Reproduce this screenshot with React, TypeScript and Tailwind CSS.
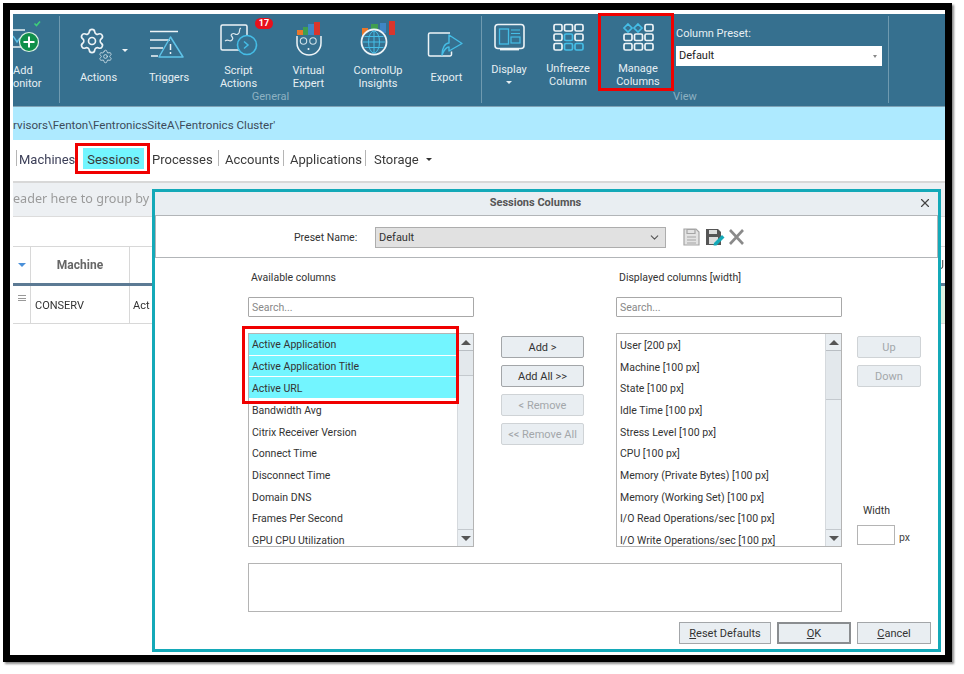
import type { ReactNode } from "react";
import { X, ChevronDown, Settings } from "lucide-react";

const available = [
  "Active Application",
  "Active Application Title",
  "Active URL",
  "Bandwidth Avg",
  "Citrix Receiver Version",
  "Connect Time",
  "Disconnect Time",
  "Domain DNS",
  "Frames Per Second",
  "GPU CPU Utilization",
];

const displayed = [
  "User [200 px]",
  "Machine [100 px]",
  "State [100 px]",
  "Idle Time [100 px]",
  "Stress Level [100 px]",
  "CPU [100 px]",
  "Memory (Private Bytes) [100 px]",
  "Memory (Working Set) [100 px]",
  "I/O Read Operations/sec [100 px]",
  "I/O Write Operations/sec [100 px]",
];

function RibbonItem({
  width,
  label,
  icon,
  children,
}: {
  width: string;
  label: ReactNode;
  icon: ReactNode;
  children?: ReactNode;
}) {
  return (
    <div className={`relative flex flex-col items-center shrink-0 ${width}`}>
      {icon}
      <div className="mt-[1px] h-[28px] flex items-center justify-center text-center text-[11px] leading-[13px] text-[#e6eff3]">
        {label}
      </div>
      {children}
    </div>
  );
}

function TabSep() {
  return <div className="w-px h-[16px] bg-[#b5b5b5] shrink-0" />;
}

function ListBox({
  items,
  selected,
  thumb,
  children,
}: {
  items: string[];
  selected: number;
  thumb: string;
  children?: ReactNode;
}) {
  return (
    <div className="relative">
      <div className="flex h-[214px] w-[226px] border border-[#b4b4b4] bg-white overflow-hidden">
        <div className="flex-1 min-w-0">
          {items.map((item, i) => (
            <div
              key={item}
              className={`h-[21.7px] flex items-center pl-[3px] pt-[2px] text-[10.5px] text-[#333] whitespace-nowrap ${
                i < selected ? "bg-[#73f5ff] border-b border-white" : ""
              }`}
            >
              {item}
            </div>
          ))}
        </div>
        <div className="w-[16px] bg-[#e9eef2] flex flex-col border-l border-[#d5d9dd]">
          <div className="h-[17px] bg-[#e9eef2] border-b border-[#b9bec3] flex items-center justify-center">
            <div className="w-0 h-0 border-x-[5px] border-x-transparent border-b-[5px] border-b-[#555]" />
          </div>
          <div className={`bg-[#e3e8ec] border-b border-[#c4c9ce] ${thumb}`} />
          <div className="flex-1" />
          <div className="h-[17px] border-t border-[#c4c9ce] flex items-center justify-center">
            <div className="w-0 h-0 border-x-[5px] border-x-transparent border-t-[5px] border-t-[#555]" />
          </div>
        </div>
      </div>
      {children}
    </div>
  );
}

function SearchBox() {
  return (
    <div className="h-[20px] w-[226px] border border-[#a8a8a8] rounded-[1px] bg-white flex items-center pl-[3px] pt-[2px] text-[10.5px] text-[#888]">
      Search...
    </div>
  );
}

function SideButton({
  children,
  disabled,
  width = "w-[83px]",
}: {
  children: ReactNode;
  disabled?: boolean;
  width?: string;
}) {
  return (
    <div
      className={`h-[22px] ${width} rounded-[2px] bg-[#e9eef2] border flex items-center justify-center pt-[2px] text-[11px] ${
        disabled ? "border-[#cfd3d6] text-[#a3a7aa]" : "border-[#a3a6a9] text-[#333]"
      }`}
    >
      {children}
    </div>
  );
}

function FooterButton({
  children,
  width,
  strong,
}: {
  children: ReactNode;
  width: string;
  strong?: boolean;
}) {
  return (
    <div
      className={`h-[22px] ${width} bg-[#e9eef2] flex items-center justify-center pt-[2px] text-[11px] text-[#333] ${
        strong ? "border-2 border-[#8a8d90]" : "border border-[#a3a6a9]"
      }`}
    >
      {children}
    </div>
  );
}

function SessionsDialog() {
  return (
    <div className="absolute left-[142px] top-[179px] w-[789px] h-[463px] border-[3px] border-[#14a9b8] bg-white flex flex-col">
      <div className="relative h-[23px] bg-[#e9eef2] flex items-center justify-center pr-[22px] shrink-0 text-[11px] font-bold text-[#555]">
        Sessions Columns
        <X className="absolute right-[6px] top-[4px] w-[14px] h-[14px] text-[#444]" strokeWidth={2} />
      </div>
      <div className="h-[43px] border border-[#b2b5b8] flex items-center pt-[1px] shrink-0">
        <div className="ml-[138px] w-[81px] pt-[2px] text-[10.5px] text-[#333]">Preset Name:</div>
        <div className="w-[291px] h-[21px] bg-[#e1e1e1] border border-[#adadad] flex items-center justify-between pl-[3px] pr-[3px] text-[11px] text-[#333]">
          <span className="pt-[2px]">Default</span>
          <ChevronDown className="w-[13px] h-[13px] text-[#555] mr-[1px]" />
        </div>
        <svg className="ml-[17px] w-[64px] h-[18px]" viewBox="0 0 64 18">
          <path d="M1 1h12l3 3v13H1z" fill="#e3e3e3" stroke="#a5a5a5" strokeWidth="1.2" />
          <path d="M4 1.5h8v4H4zM4 9h9M4 12h9M4 15h9" fill="none" stroke="#a5a5a5" strokeWidth="1.2" />
          <path d="M23 1h12l3 3v13H23z" fill="#555" />
          <path d="M26 2h8v4h-8zM26 9h9v7h-9z" fill="#ddd" />
          <path d="M31 15l8-8 2.5 2.5-8 8h-3z" fill="#14a9b8" />
          <path d="M47 2l13 14M60 2L47 16" stroke="#8a8a8a" strokeWidth="2.6" />
        </svg>
      </div>
      <div className="flex-1 pl-[93px]">
        <div className="flex">
          <div className="w-[226px]">
            <div className="h-[14px] mt-[13px] mb-[12px] pl-[3px] text-[10.5px] leading-[14px] text-[#333]">
              Available columns
            </div>
            <SearchBox />
            <div className="mt-[16px]">
              <ListBox items={available} selected={3} thumb="h-[25px]">
                <div className="absolute left-[-6px] top-[-7px] w-[217px] h-[78px] border-[3px] border-[#f00000]" />
              </ListBox>
            </div>
          </div>
          <div className="ml-[27px] w-[84px] pt-[78px] flex flex-col gap-[7px]">
            <SideButton>Add &gt;</SideButton>
            <SideButton>Add All &gt;&gt;</SideButton>
            <SideButton disabled>&lt; Remove</SideButton>
            <SideButton disabled>&lt;&lt; Remove All</SideButton>
          </div>
          <div className="ml-[31px] w-[226px]">
            <div className="h-[14px] mt-[13px] mb-[12px] pl-[3px] text-[10.5px] leading-[14px] text-[#333]">
              Displayed columns [width]
            </div>
            <SearchBox />
            <div className="mt-[16px]">
              <ListBox items={displayed} selected={0} thumb="h-[49px]" />
            </div>
          </div>
          <div className="ml-[15px] w-[64px] pt-[78px] flex flex-col">
            <div className="flex flex-col gap-[7px]">
              <SideButton disabled width="w-[64px]">Up</SideButton>
              <SideButton disabled width="w-[64px]">Down</SideButton>
            </div>
            <div className="mt-[117px] pl-[6px] text-[10.5px] leading-[14px] text-[#333]">Width</div>
            <div className="mt-[7px] flex items-end">
              <div className="w-[38px] h-[20px] border border-[#b4b4b4] bg-white" />
              <span className="ml-[4px] text-[10.5px] leading-[14px] text-[#444]">px</span>
            </div>
          </div>
        </div>
        <div className="mt-[16px] w-[594px] h-[49px] border border-[#b4b4b4] bg-white" />
      </div>
      <div className="flex justify-end gap-[6px] pr-[7px] pb-[5px] shrink-0">
        <FooterButton width="w-[92px]">
          <span><u>R</u>eset Defaults</span>
        </FooterButton>
        <FooterButton width="w-[74px]" strong>
          <span><u>O</u>K</span>
        </FooterButton>
        <FooterButton width="w-[74px]">
          <span><u>C</u>ancel</span>
        </FooterButton>
      </div>
    </div>
  );
}

export default function App() {
  return (
    <div className="w-[964px] h-[674px] bg-white pl-[3px] pt-[3px] font-['Roboto',sans-serif] overflow-hidden">
      <div className="w-[949px] h-[659px] border-[7px] border-black bg-white shadow-[2px_2px_2px_rgba(0,0,0,0.45)] blur-[0.6px]">
        <div className="relative h-full pl-[3px] pt-[4px] overflow-hidden">
          {/* Ribbon */}
          <div className="h-[93px] bg-[#36708f] border-b border-[#7fa3b6] flex pt-[2px]">
            <div className="w-[47px] shrink-0 h-[87px] border-r border-[#6f9ab0] overflow-hidden">
              <svg className="w-[46px] h-[46px]" viewBox="13 16 46 46" fill="none">
                <path d="M13 30h12M13 47h12" stroke="#e6eff3" strokeWidth="1.6" />
                <path d="M13 36l4 6 3-4" stroke="#5fc3e8" strokeWidth="1.4" />
                <circle cx="29" cy="42" r="9.5" fill="#0f8f4a" stroke="#dff3e6" strokeWidth="1.2" />
                <path d="M23.5 42h11M29 36.5v11" stroke="#fff" strokeWidth="2" />
                <path d="M34.5 23.5l2 2 3.5-4" stroke="#3ecf7a" strokeWidth="1.6" />
              </svg>
              <div className="mt-[1px] h-[28px] flex items-center text-[11px] leading-[13px] text-[#e6eff3]">
                <span>
                  Add
                  <br />
                  onitor
                </span>
              </div>
            </div>

            {/* General group */}
            <div className="w-[422px] shrink-0 flex flex-col h-[87px] border-r border-[#6f9ab0]">
              <div className="flex">
                <RibbonItem
                  width="w-[74px]"
                  label={<span className="pl-[3px]">Actions</span>}
                  icon={
                    <div className="relative w-[74px] h-[46px]">
                      <Settings className="absolute left-[18px] top-[11px] w-[28px] h-[28px] text-[#eef4f7]" strokeWidth={1.4} />
                      <Settings className="absolute left-[38px] top-[33px] w-[15px] h-[15px] text-[#cfe0e8]" strokeWidth={1.4} />
                      <div className="absolute left-[62px] top-[33px] w-0 h-0 border-x-[3px] border-x-transparent border-t-[3px] border-t-[#eef4f7]" />
                    </div>
                  }
                />
                <RibbonItem
                  width="w-[70px]"
                  label="Triggers"
                  icon={
                    <svg className="w-[70px] h-[46px]" viewBox="134 16 70 46" fill="none">
                      <path d="M150 31.5h28M150 40h20M150 48h13M151 56h7" stroke="#eef4f7" strokeWidth="1.4" />
                      <path d="M170.500 37L183 57h-24z" stroke="#5fc3e8" strokeWidth="1.5" strokeLinejoin="round" />
                      <path d="M170.500 44v6M170.500 52v2" stroke="#eef4f7" strokeWidth="1.5" />
                    </svg>
                  }
                />
                <RibbonItem
                  width="w-[69px]"
                  label={
                    <span>
                      Script
                      <br />
                      Actions
                    </span>
                  }
                  icon={
                    <svg className="w-[69px] h-[46px]" viewBox="204 16 69 46" fill="none">
                      <rect x="221" y="25" width="26" height="25" rx="1.5" stroke="#eef4f7" strokeWidth="1.5" />
                      <path d="M225 41c4-3 4 2 7-1s-3-4 0-6 3 2 6 0 0-5 3-6" stroke="#dbe7ed" strokeWidth="1.2" />
                      <circle cx="247" cy="45" r="9.500" fill="#36708f" stroke="#45bde6" strokeWidth="1.6" />
                      <path d="M244 41.500l4 3.500-4 3.500" stroke="#45bde6" strokeWidth="1.5" />
                    </svg>
                  }
                >
                  <div className="absolute left-[51px] top-[2px] w-[18px] h-[11px] rounded-full bg-[#e8101c] flex items-center justify-center text-[9px] font-bold leading-none text-white">
                    17
                  </div>
                </RibbonItem>
                <RibbonItem
                  width="w-[71px]"
                  label={
                    <span>
                      Virtual
                      <br />
                      Expert
                    </span>
                  }
                  icon={
                    <svg className="w-[71px] h-[46px]" viewBox="273 16 71 46" fill="none">
                      <path d="M297 30h6v5h-6z" fill="#e9772b" />
                      <path d="M303 27h5v8h-5z" fill="#3f9e4f" />
                      <path d="M308 24h6v11h-6z" fill="#3f86c6" />
                      <path d="M314 22h6v13h-6z" fill="#d9352c" />
                      <path d="M297 36v7a12 12 0 0 0 24 0v-7" stroke="#eef4f7" strokeWidth="1.5" />
                      <circle cx="303.500" cy="41" r="3.200" stroke="#cfe0e8" strokeWidth="1.100" />
                      <circle cx="313" cy="41" r="3.200" stroke="#cfe0e8" strokeWidth="1.100" />
                      <circle cx="308.500" cy="49" r="1" fill="#eef4f7" />
                    </svg>
                  }
                />
                <RibbonItem
                  width="w-[68px]"
                  label={
                    <span>
                      ControlUp
                      <br />
                      Insights
                    </span>
                  }
                  icon={
                    <svg className="w-[68px] h-[46px]" viewBox="344 16 68 46" fill="none">
                      <path d="M362 28h6v8h-6z" fill="#e9772b" />
                      <path d="M371 24h7v8h-7z" fill="#3f9e4f" />
                      <path d="M380 23h6v10h-6z" fill="#3f86c6" />
                      <path d="M389 21h6v14h-6z" fill="#d9352c" />
                      <circle cx="374" cy="42" r="12.500" fill="#36708f" stroke="#eef4f7" strokeWidth="1.800" />
                      <ellipse cx="374" cy="42" rx="5.500" ry="11" stroke="#45bde6" strokeWidth="1" />
                      <path d="M374 31v22M363 42h22M364.500 36.500h19M364.500 47.500h19" stroke="#45bde6" strokeWidth="1" />
                    </svg>
                  }
                />
                <RibbonItem
                  width="w-[69px]"
                  label="Export"
                  icon={
                    <svg className="w-[69px] h-[46px]" viewBox="412 16 69 46" fill="none">
                      <path d="M450 33h-20a1.500 1.500 0 0 0-1.500 1.500v20a1.500 1.500 0 0 0 1.500 1.500h20a1.500 1.500 0 0 0 1.500-1.500v-3" stroke="#eef4f7" strokeWidth="1.500" />
                      <path d="M442 55c0-7 3-12 7-12v-8l13 8.500-13 7.500v-4c-3 0-5 3-7 8z" fill="#36708f" stroke="#45bde6" strokeWidth="1.400" strokeLinejoin="round" />
                    </svg>
                  }
                />
              </div>
              <div className="h-[12px] text-center text-[11px] leading-[12px] text-[#8db1c2]">General</div>
            </div>

            {/* View group */}
            <div className="w-[407px] shrink-0 flex flex-col h-[87px] border-r border-[#6f9ab0]">
              <div className="flex">
                <RibbonItem
                  width="w-[54px]"
                  label={
                    <span className="flex flex-col items-center -mt-[7px]">
                      Display
                      <span className="mt-[5px] w-0 h-0 border-x-[3px] border-x-transparent border-t-[3px] border-t-[#e6eff3]" />
                    </span>
                  }
                  icon={
                    <svg className="w-[54px] h-[46px]" viewBox="482 16 54 46" fill="none">
                      <rect x="495" y="24.500" width="29" height="24" rx="3" stroke="#eef4f7" strokeWidth="1.600" />
                      <path d="M500 49.500h19" stroke="#eef4f7" strokeWidth="1.800" />
                      <rect x="499.500" y="29" width="9" height="15" stroke="#45bde6" strokeWidth="1.300" />
                      <path d="M511 30h9M511 33.500h9" stroke="#45bde6" strokeWidth="1.200" />
                      <rect x="511" y="37" width="9" height="6" stroke="#45bde6" strokeWidth="1.200" />
                    </svg>
                  }
                />
                <RibbonItem
                  width="w-[64px]"
                  label={
                    <span className="-mt-[5px]">
                      Unfreeze
                      <br />
                      Column
                    </span>
                  }
                  icon={
                    <svg className="w-[64px] h-[46px]" viewBox="536 16 64 46" fill="none" strokeWidth="1.700">
                      {[24.500, 34, 43.500].map((y, r) =>
                        [554, 564.500, 575].map((x, c) => (
                          <rect
                            key={`${r}-${c}`}
                            x={x}
                            y={y}
                            width="8"
                            height="6.500"
                            rx="1.500"
                            stroke={(r === 1 && c === 1) || (r === 2 && c > 0) ? "#45bde6" : "#eef4f7"}
                          />
                        ))
                      )}
                    </svg>
                  }
                />
                <RibbonItem
                  width="w-[76px]"
                  label={
                    <span className="-mt-[5px]">
                      Manage
                      <br />
                      Columns
                    </span>
                  }
                  icon={
                    <svg className="w-[76px] h-[46px]" viewBox="600 16 76 46" fill="none" strokeWidth="1.700">
                      <path d="M628 24l4 4-4 4-4-4zM638 24l4 4-4 4-4-4z" stroke="#45bde6" />
                      <rect x="645" y="24.500" width="8" height="6.500" rx="1.500" stroke="#eef4f7" />
                      {[34, 43.500].map((y) =>
                        [624, 634.500, 645].map((x) => (
                          <rect key={`${x}-${y}`} x={x} y={y} width="8" height="6.500" rx="1.500" stroke="#eef4f7" />
                        ))
                      )}
                    </svg>
                  }
                >
                  <div className="absolute left-[-2px] top-[-3px] w-[76px] h-[78px] border-[3px] border-[#f00000]" />
                </RibbonItem>
                <div className="w-[206px] shrink-0 pt-[11px]">
                  <div className="h-[14px] text-[11px] leading-[14px] text-[#e6eff3]">Column Preset:</div>
                  <div className="mt-[5px] h-[20px] bg-white flex items-center justify-between pl-[3px] pr-[5px] text-[11px] text-[#222]">
                    Default
                    <span className="w-0 h-0 border-x-[2.500px] border-x-transparent border-t-[3px] border-t-[#888]" />
                  </div>
                </div>
              </div>
              <div className="h-[12px] text-center text-[11px] leading-[12px] text-[#8db1c2]">View</div>
            </div>
          </div>

          {/* Path bar */}
          <div className="h-[33px] bg-[#aeeaff] flex items-center pt-[4px] text-[11.6px] text-[#3d4a5a] overflow-hidden">
            <span className="whitespace-nowrap">rvisors\Fenton\FentronicsSiteA\Fentronics Cluster'</span>
          </div>

          {/* Tabs */}
          <div className="h-[43px] border-b-2 border-[#d8d8d8] flex items-center pb-[5px] text-[13px] text-[#3a3a3a]">
            <div className="ml-[3px] mr-[2px]"><TabSep /></div>
            <div className="w-[64px] pt-[4px] text-[#3c3f58]">Machines</div>
            <div className="relative w-[61px] h-[21px] bg-[#73f5ff] flex items-center justify-center pt-[4px]">
              Sessions
              <div className="absolute left-[-8px] top-[-5px] w-[75px] h-[31px] border-[3px] border-[#f00000]" />
            </div>
            <div className="ml-[8px] w-[66px] pt-[4px]">Processes</div>
            <TabSep />
            <div className="ml-[6px] w-[58px] pt-[4px]">Accounts</div>
            <TabSep />
            <div className="ml-[6px] w-[75px] pt-[4px]">Applications</div>
            <TabSep />
            <div className="ml-[8px] w-[52px] pt-[4px]">Storage</div>
            <div className="mt-[2px] w-0 h-0 border-x-[3px] border-x-transparent border-t-[3px] border-t-[#333]" />
          </div>

          {/* Group-by band */}
          <div className="h-[34px] bg-[#edf0f3] border-b border-[#dcdcdc] flex items-center text-[#9b9b9b] overflow-hidden">
            <span className="font-['Noto_Sans',sans-serif] text-[12.6px] whitespace-nowrap">eader here to group by</span>
          </div>

          {/* Grid */}
          <div className="h-[29px]" />
          <div className="h-[37px] flex border-t border-[#d8d8d8] text-[12px] font-bold text-[#666]">
            <div className="w-[18px] shrink-0 border-r border-[#d8d8d8] flex items-center justify-center">
              <div className="w-0 h-0 border-x-[4px] border-x-transparent border-t-[4px] border-t-[#4a90d9]" />
            </div>
            <div className="w-[99px] shrink-0 border-r border-[#d8d8d8] flex items-center justify-center">Machine</div>
            <div className="flex-1 flex items-center justify-end pr-[1px] font-normal text-[#555]">U</div>
          </div>
          <div className="h-[3px] bg-[#5c7a94]" />
          <div className="h-[38px] flex border-b border-[#d8d8d8] text-[11px] text-[#333]">
            <div className="w-[18px] shrink-0 border-r border-[#d8d8d8] flex flex-col items-center gap-[1.500px] pt-[9px]">
              <div className="w-[8px] h-px bg-[#999]" />
              <div className="w-[8px] h-px bg-[#999]" />
              <div className="w-[8px] h-px bg-[#999]" />
            </div>
            <div className="w-[99px] shrink-0 border-r border-[#d8d8d8] flex items-center pl-[4px] pt-[4px]">CONSERV</div>
            <div className="flex-1 flex items-center pl-[3px] pt-[4px]">Act</div>
            <div className="w-[10px] bg-[#dff2e2]" />
          </div>

          <SessionsDialog />
        </div>
      </div>
    </div>
  );
}
